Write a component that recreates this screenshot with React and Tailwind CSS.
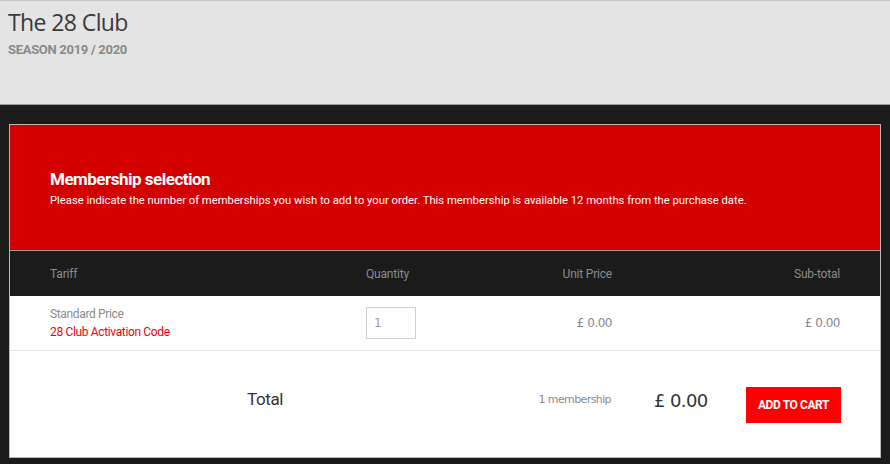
import React from "react";

const App = () => {
  return (
    <div className="w-[890px] h-[464px] overflow-hidden bg-[#1b1b1b] font-['Roboto',sans-serif]">
      <div className="h-[105px] bg-[#e4e4e4] border-t border-[#c4c4c4] border-b border-b-[#9a9a9a] px-[8px] pt-[6px]">
        <h1 className="text-[23px] leading-[30px] font-normal text-[#3a3a3a] font-['Open_Sans',sans-serif] tracking-[-0.6px]">
          The 28 Club
        </h1>
        <p className="mt-[6px] text-[13px] leading-[14px] font-bold text-[#8a8a8a] tracking-[-0.3px]">
          SEASON 2019 / 2020
        </p>
      </div>

      <div className="mx-[9px] mt-[19px] border border-[#b8b8b8] bg-white">
        <div className="h-[125px] bg-[#d40000] px-[40px] pt-[42px]">
          <h2 className="text-[17px] leading-[24px] font-bold text-white tracking-[-0.5px]">
            Membership selection
          </h2>
          <p className="mt-[3px] text-[11.25px] leading-[14px] text-white">
            Please indicate the number of memberships you wish to add to your order. This membership is available 12 months from the purchase date.
          </p>
        </div>

        <div className="grid grid-cols-[316px_120px_126px_1fr] items-center h-[46px] bg-[#1b1b1b] border-t border-[#9a9a9a] px-[40px] text-[12px] text-[#8c8c8c] tracking-[-0.2px]">
          <span>Tariff</span>
          <span>Quantity</span>
          <span className="text-right">Unit Price</span>
          <span className="text-right">Sub-total</span>
        </div>

        <div className="grid grid-cols-[316px_120px_126px_1fr] items-center h-[55px] border-b border-[#e3e3e3] px-[40px]">
          <div className="text-[12px] leading-[18px] tracking-[-0.35px]">
            <div className="text-[#8a8a8a]">Standard Price</div>
            <div className="text-[#e8000a]">28 Club Activation Code</div>
          </div>
          <div>
            <input
              defaultValue="1"
              className="w-[50px] h-[32px] border border-[#cfcfcf] px-[7px] text-[12px] text-[#999] font-['DejaVu_Sans',sans-serif] outline-none"
            />
          </div>
          <span className="text-right text-[12px] text-[#8a8a8a] font-['DejaVu_Sans',sans-serif] tracking-[-0.5px]">£ 0.00</span>
          <span className="text-right text-[12px] text-[#8a8a8a] font-['DejaVu_Sans',sans-serif] tracking-[-0.5px]">£ 0.00</span>
        </div>

        <div className="flex items-center h-[106px] pl-[237px] pr-[39px]">
          <span className="mb-[8px] text-[17px] text-[#333] tracking-[-0.4px]">Total</span>
          <span className="flex-1" />
          <span className="mr-[43px] mb-[8px] text-[11px] text-[#8a8a8a] font-['DejaVu_Sans',sans-serif] tracking-[-0.6px]">1 membership</span>
          <span className="w-[92px] mb-[8px] text-[18px] text-[#333] font-['DejaVu_Sans',sans-serif] tracking-[-0.6px]">£ 0.00</span>
          <button className="w-[95px] h-[36px] mt-[2px] bg-[#ff0000] text-white text-[12px] font-bold tracking-[-0.4px]">
            ADD TO CART
          </button>
        </div>
      </div>
    </div>
  );
};

export default App;
